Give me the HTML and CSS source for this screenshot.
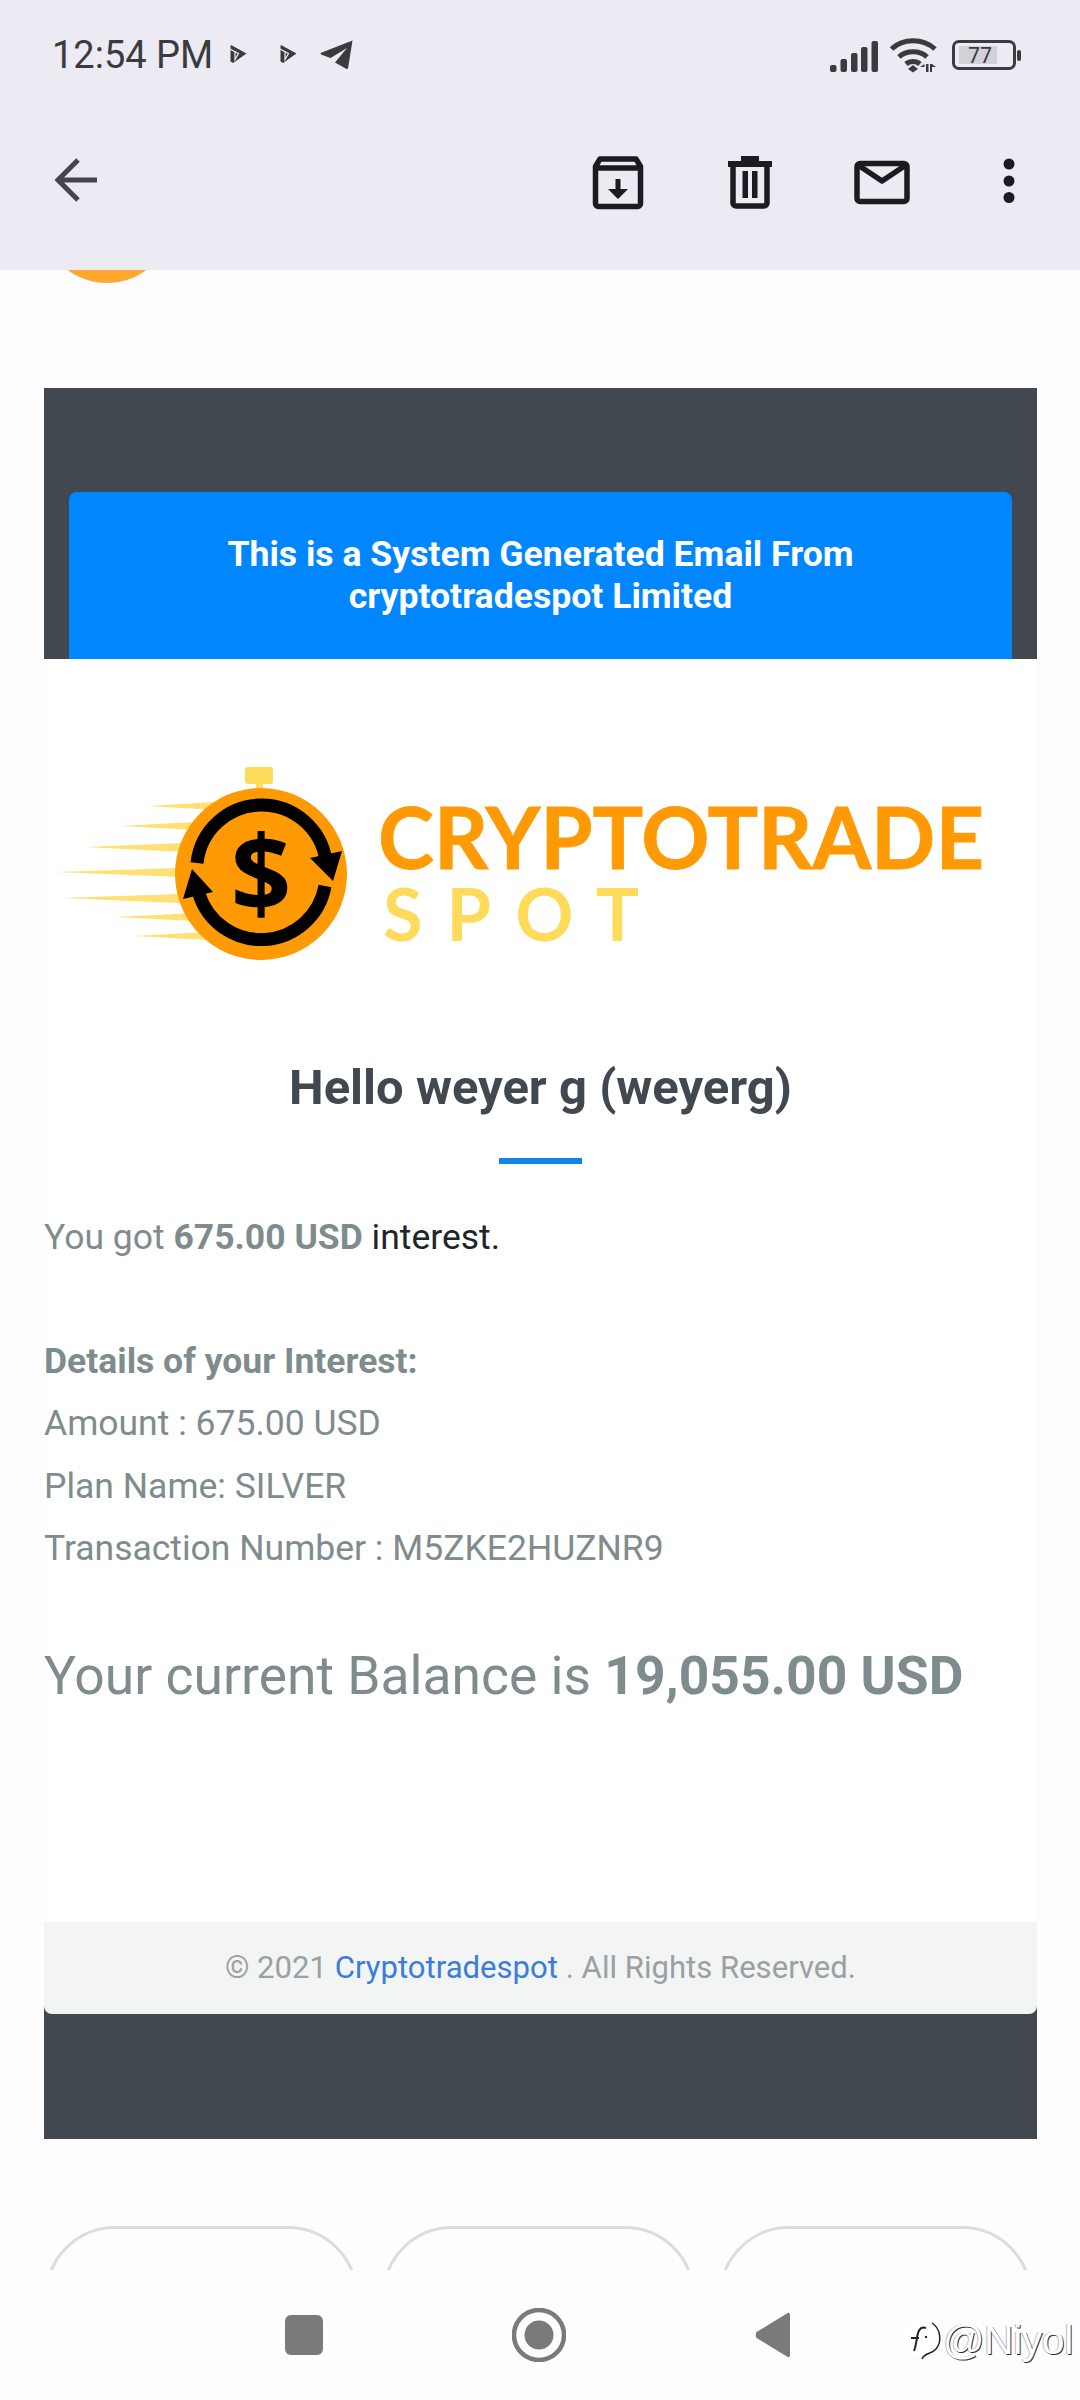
FILE: index.html
```html
<!DOCTYPE html>
<html lang="en">
<head>
<meta charset="utf-8">
<title>Email</title>
<link rel="stylesheet" href="styles.css">
</head>
<body>
<div class="screen">
  <header class="appbar">
    <div class="status">
      <span class="time">12:54 PM</span>
      <svg class="ic-play first" viewBox="0 0 17 20"><path class="dk" d="M1 1 16.500 9.500 3 19 0.500 17.500V2Z"/><path class="slit" d="M0 5 8.500 9.500 5 15.500V7"/></svg>
      <svg class="ic-play second" viewBox="0 0 17 20"><path class="dk" d="M1 1 16.500 9.500 3 19 0.500 17.500V2Z"/><path class="slit" d="M0 5 8.500 9.500 5 15.500V7"/></svg>
      <svg class="ic-tg" viewBox="0 0 33 30"><path class="dk" d="M32.500 0.500 28 28.500 26.500 29 15 22.500 27 8 10.500 18 1 14.500 0.500 13Z"/></svg>
      <span class="grow"></span>
      <svg class="ic-signal" viewBox="0 0 48 32"><g class="dk"><rect x="0" y="25" width="6.500" height="7" rx="2"/><rect x="10.500" y="19" width="6.500" height="13" rx="2"/><rect x="21" y="13" width="6.500" height="19" rx="2"/><rect x="31" y="7" width="6.500" height="25" rx="2"/><rect x="41.500" y="1" width="6.500" height="31" rx="2"/></g></svg>
      <svg class="ic-wifi" viewBox="0 0 47 36"><g class="wifi-arcs"><path d="M1.500 12C13 1 33 1 45 12"/><path d="M9 20C16 13 30 13 37 20"/><path d="M16 27C20 23.500 26 23.500 30 27"/></g><path class="dk" d="M23 28 28 32 23 35.500 18 32Z"/><path class="dk" d="M36 27V35H38.500V27ZM40 27V35H42V30H46L42 27ZM30 30H34.500V27Z"/></svg>
      <span class="battery"><span class="battery-body"><span class="battery-fill">77</span></span><span class="battery-nub"></span></span>
    </div>
    <div class="actions">
      <svg class="ic-back" viewBox="0 0 60 60"><path d="M52 30H13M33 10 13 30 33 50"/></svg>
      <span class="grow"></span>
      <svg class="ic-act" viewBox="0 0 72 72"><path class="ln" d="M13.500 20.500 18 13H54L58.500 20.500V57A3 3 0 0 1 55.500 60.500H16.500A3 3 0 0 1 13.500 57ZM14 22H58"/><path class="fl" d="M33.500 33H38.500V43H46L36 53 26 43H33.500Z"/></svg>
      <svg class="ic-act" viewBox="0 0 72 72"><path class="ln" d="M19 19V57A3 3 0 0 0 22 60H50A3 3 0 0 0 53 57V19"/><path class="fl" d="M14 15H27V10H45V15H58V21H14ZM28.500 25H34V52H28.500ZM38 25H43.500V52H38Z"/></svg>
      <svg class="ic-act" viewBox="0 0 72 72"><rect class="ln" x="11" y="17.500" width="50" height="38" rx="3"/><path class="ln" d="M12 19 36 35 60 19"/></svg>
      <svg class="ic-dots" viewBox="0 0 12 48"><circle cx="6" cy="6" r="5.500"/><circle cx="6" cy="23" r="5.500"/><circle cx="6" cy="39.500" r="5.500"/></svg>
    </div>
  </header>

  <main class="content">
    <div class="avatar-clip"><div class="avatar"></div></div>

    <section class="email">
      <div class="banner-wrap">
        <div class="banner">This is a System Generated Email From<br>cryptotradespot Limited</div>
      </div>
      <div class="panel">
        <svg class="logo" viewBox="44 740 993 240">
          <g class="streaks">
            <path d="M148 805 215 801V809Z"/>
            <path d="M120 825 195 821V829Z"/>
            <path d="M85 846 185 842V851Z"/>
            <path d="M57 871 180 867V876Z"/>
            <path d="M62 897 180 893V902Z"/>
            <path d="M115 916 195 912V920Z"/>
            <path d="M133 935 210 931V939Z"/>
          </g>
          <rect class="knob" x="245" y="766" width="28" height="17" rx="3"/>
          <rect class="knob" x="256" y="780" width="7" height="12"/>
          <circle class="dial" cx="261" cy="873" r="86"/>
          <path class="ring" d="M197 862A65 65 0 0 1 326 860"/>
          <path class="ring" d="M325 885A65 65 0 0 1 199 893"/>
          <path class="arrow" d="M342 850 310 857 333 880Z"/>
          <path class="arrow" d="M192 868 183 898 213 891Z"/>
          <text class="dollar" x="261" y="911" text-anchor="middle">$</text>
          <text class="logo-a" x="378" y="868" textLength="606" lengthAdjust="spacingAndGlyphs">CRYPTOTRADE</text>
          <text class="logo-b" x="383" y="940" textLength="256">SPOT</text>
        </svg>
        <h1 class="hello">Hello weyer g (weyerg)</h1>
        <div class="rule"></div>
        <p class="line first-line">You got <b>675.00 USD</b> <span class="dark">interest.</span></p>
        <p class="line detail-head"><b>Details of your Interest:</b></p>
        <p class="line">Amount : 675.00 USD</p>
        <p class="line">Plan Name: SILVER</p>
        <p class="line">Transaction Number : M5ZKE2HUZNR9</p>
        <p class="balance">Your current Balance is <b>19,055.00 USD</b></p>
      </div>
      <footer class="foot">© 2021 <span class="link">Cryptotradespot</span> . All Rights Reserved.</footer>
    </section>

    <div class="pills">
      <div class="pill"></div>
      <div class="pill"></div>
      <div class="pill"></div>
    </div>
  </main>

  <nav class="navbar">
    <span class="nav-square"></span>
    <svg class="nav-home" viewBox="0 0 54 54"><circle class="o" cx="27" cy="27" r="25"/><circle class="i" cx="27" cy="27" r="14.500"/></svg>
    <svg class="nav-back" viewBox="0 0 36 46"><path d="M35 2V44L33.500 45.500 1.500 26Q0 23 1.500 20L33.500 0.500Z"/></svg>
  </nav>

  <div class="watermark">
    <svg class="wm-logo" viewBox="0 0 40 44"><circle class="blob" cx="19" cy="20" r="18.500"/><path class="wm-edge" d="M30 5C39 11 40 24 34 31 30 36 22 35 20 41"/><path class="wm-f" d="M24 10C18 8 16 13 15 20 14 25 14 28 12 33M9 20H17M23 19H25"/></svg>
    <span class="wm-text">@Niyol</span>
  </div>
</div>
</body>
</html>
```
FILE: styles.css
```css
* { box-sizing: border-box; }
html, body { margin: 0; padding: 0; }
body { font-family: Roboto, "Liberation Sans", sans-serif; background: #fdfcff; }
.screen { position: relative; width: 1080px; height: 2400px; overflow: hidden; display: flex; flex-direction: column; background: #fdfcff; }
.grow { flex: 1; }

.appbar { height: 270px; background: #ecebf3; flex: none; position: relative; z-index: 1; }
.status { height: 110px; padding: 0 59px 0 52px; display: flex; align-items: center; color: #3b3b3f; }
.time { font-size: 38px; line-height: 1; }
.dk { fill: #3b3b3f; }
.slit { fill: none; stroke: #ecebf3; stroke-width: 1.200; }
.ic-play { width: 17px; height: 20px; }
.ic-play.first { margin-left: 17px; margin-top: -2px; }
.ic-play.second { margin-left: 33px; margin-top: -2px; }
.ic-tg { width: 33px; height: 30px; margin-left: 23px; }
.ic-signal { width: 48px; height: 32px; margin-top: 2px; }
.ic-wifi { width: 47px; height: 36px; margin-left: 12px; }
.wifi-arcs path { fill: none; stroke: #3b3b3f; stroke-width: 5; }
.battery { display: flex; align-items: center; margin-left: 15px; }
.battery-body { width: 64px; height: 30px; border: 3px solid #3b3b3f; border-radius: 7px; padding: 3px 0 3px 4px; display: flex; }
.battery-fill { width: 38px; height: 18px; background: #d2d1d7; font-size: 21px; line-height: 18px; color: #3b3b3f; padding-left: 9px; font-family: "Noto Sans", sans-serif; }
.battery-nub { width: 4px; height: 11px; background: #3b3b3f; border-radius: 2px; margin-left: 1px; }

.actions { height: 144px; display: flex; align-items: center; padding: 0 65px 0 45px; }
.ic-back { width: 60px; height: 60px; margin-top: -4px; }
.ic-back path { fill: none; stroke: #44464f; stroke-width: 5; }
.ic-act { width: 72px; height: 72px; margin-right: 60px; }
.ic-act:nth-of-type(4) { margin-right: 0; }
.ic-act .ln { fill: none; stroke: #1c1b1f; stroke-width: 5.500; stroke-linejoin: round; }
.ic-act .fl { fill: #1c1b1f; }
.ic-dots { width: 12px; height: 48px; margin-left: 85px; }
.ic-dots circle { fill: #1c1b1f; }

.content { flex: 1; min-height: 0; overflow: hidden; }
.avatar-clip { height: 13px; width: 200px; overflow: hidden; margin-left: 7px; }
.avatar { width: 132px; height: 132px; border-radius: 50%; background: #fea82f; margin: -119px 0 0 34px; }

.email { margin: 105px 43px 0 44px; background: #41484f; padding-top: 104px; padding-bottom: 125px; }
.banner-wrap { padding: 0 25px; }
.banner { height: 167px; background: #0087ff; color: #fff; border-radius: 8px 8px 0 0; text-align: center; font-size: 35.600px; font-weight: 700; line-height: 42px; padding-top: 41px; }
.panel { background: #fff; height: 1263px; overflow: hidden; color: #7f8c8d; }
.logo { display: block; width: 993px; height: 240px; margin-top: 82px; }
.streaks path { fill: #ffdb5c; opacity: 0.85; }
.knob { fill: #ffdb5c; }
.dial { fill: #ff9a05; }
.ring { fill: none; stroke: #000; stroke-width: 13; }
.arrow { fill: #000; }
.dollar { font-family: "Open Sans", sans-serif; font-weight: 700; font-size: 106px; fill: #000; }
.logo-a { font-family: Lato, sans-serif; font-weight: 700; font-size: 87px; fill: #ff9a05; stroke: #ff9a05; stroke-width: 0.800; }
.logo-b { font-family: Lato, sans-serif; font-weight: 700; font-size: 72px; fill: #ffdb5c; }
.hello { margin: 80px 0 0; text-align: center; font-size: 49px; line-height: 54px; font-weight: 700; color: #41484f; }
.rule { width: 83px; height: 6px; background: #0f85e8; margin: 43px auto 0 455px; }
.line { margin: 0; font-size: 35.500px; line-height: 62.200px; }
.first-line { margin-top: 42px; }
.detail-head { margin-top: 62px; }
.dark { color: #212529; }
.balance { margin: 65px 0 0; font-size: 53.400px; line-height: 64px; }
.foot { height: 92px; background: #f3f4f4; border-radius: 0 0 8px 8px; text-align: center; font-size: 31.100px; line-height: 92px; color: #9aa0a4; }
.link { color: #3b7ddd; }

.pills { display: flex; gap: 24px; margin: 87px 48px 0 45px; }
.pill { flex: 1; height: 140px; border: 3px solid #dcdcdc; border-radius: 70px; }

.navbar { height: 130px; flex: none; position: relative; display: flex; align-items: center; padding-left: 285px; background: #fdfcff; }
.nav-square { width: 38px; height: 40px; background: #7a7a7a; border-radius: 6px; }
.nav-home { width: 54px; height: 54px; margin-left: 189px; }
.nav-home .o { fill: none; stroke: #7a7a7a; stroke-width: 4.500; }
.nav-home .i { fill: #7a7a7a; }
.nav-back { width: 36px; height: 46px; margin-left: 189px; }
.nav-back path { fill: #7a7a7a; }

.watermark { position: absolute; left: 902px; top: 2318px; display: flex; align-items: flex-start; gap: 1px; }
.wm-text { color: #fff; font-size: 41px; line-height: 44px; letter-spacing: -0.500px; font-family: "Liberation Sans", sans-serif; text-shadow: 1px 1px 0 #333, -1px 0 0 #bbb; }
.wm-logo { width: 40px; height: 44px; }
.blob { fill: #fff; }
.wm-edge { fill: none; stroke: #222; stroke-width: 1.500; }
.wm-f { fill: none; stroke: #222; stroke-width: 2; }
```
